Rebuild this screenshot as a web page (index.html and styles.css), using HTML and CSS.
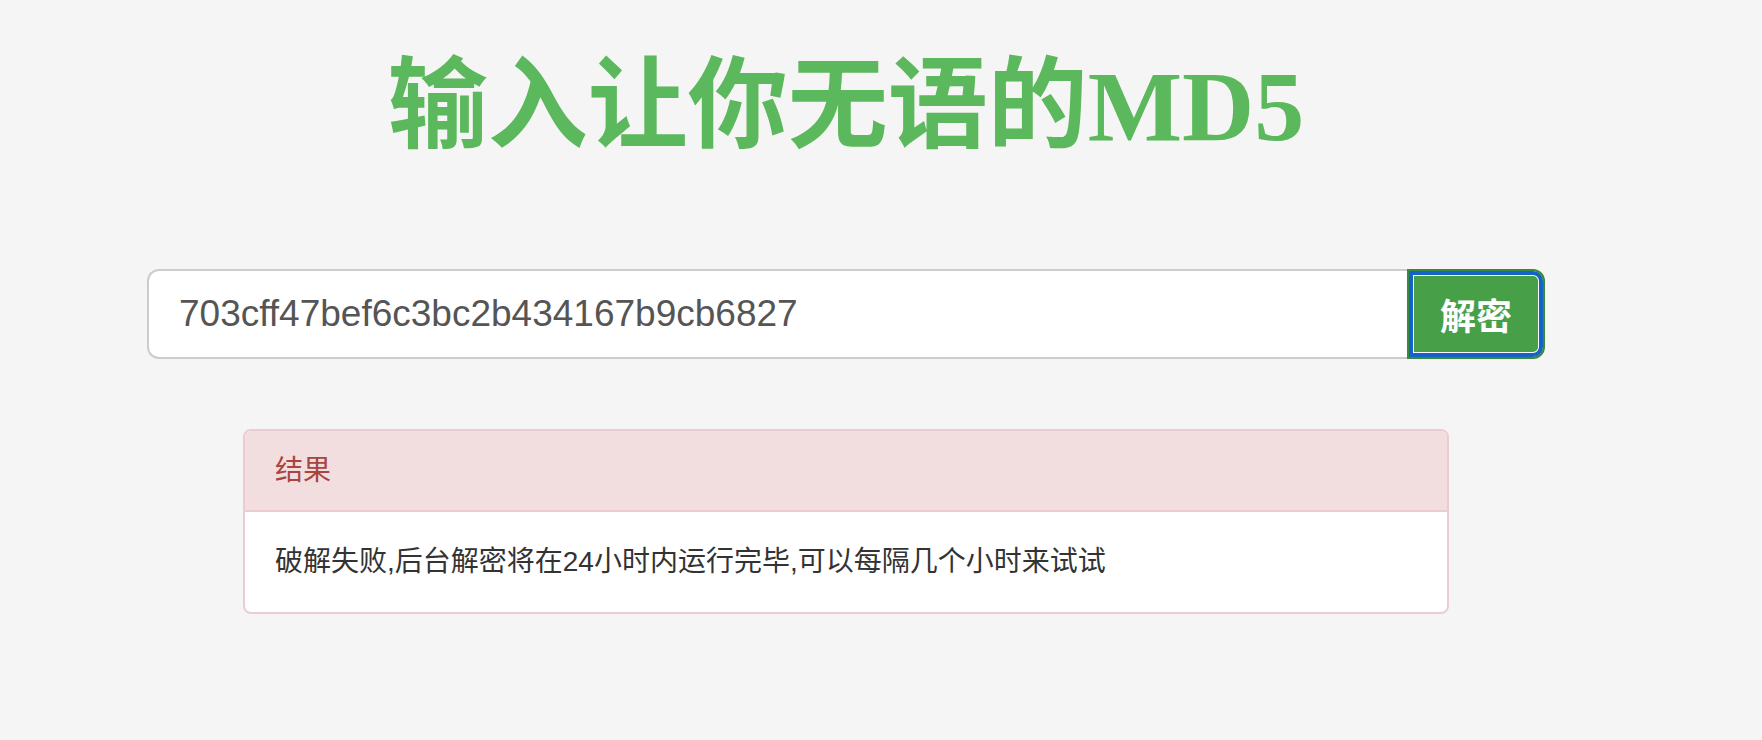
FILE: index.html
```html
<!DOCTYPE html>
<html>
<head>
<meta charset="utf-8">
<title>MD5</title>
<link rel="stylesheet" href="styles.css">
</head>
<body>
<div class="page">
  <h1 class="title">输入让你无语的MD5</h1>

  <div class="search">
    <input type="text" id="hash" class="hash" value="703cff47bef6c3bc2b434167b9cb6827">
    <button id="crack" class="crack">解密</button>
  </div>

  <div class="panel">
    <div class="panel-heading">结果</div>
    <div class="panel-body">破解失败,后台解密将在24小时内运行完毕,可以每隔几个小时来试试</div>
  </div>
</div>
</body>
</html>
```

FILE: styles.css
```css
body {
  margin: 0;
  background-color: #f5f5f5;
  font-family: "Liberation Sans", "Noto Sans CJK SC", sans-serif;
  color: #333;
}
.page {
  padding: 0 217px 0 147px;
}
.title {
  margin: 52px 0 0;
  text-align: center;
  font-family: "Liberation Serif", "Noto Sans CJK SC", serif;
  font-size: 100px;
  line-height: 110px;
  font-weight: bold;
  color: #5cb85c;
}
.search {
  display: flex;
  margin-top: 107px;
  height: 90px;
}
.hash {
  flex: 1;
  min-width: 0;
  margin: 0;
  padding: 0 30px;
  border: 2px solid #ccc;
  border-right: none;
  border-radius: 12px 0 0 12px;
  box-sizing: border-box;
  background-color: #fff;
  font-family: "Liberation Sans", sans-serif;
  font-size: 37px;
  color: #555;
  outline: none;
}
.crack {
  margin: 0;
  padding: 0 31px;
  border: 2px solid #3b8a3b;
  border-radius: 0 12px 12px 0;
  background-color: #47a047;
  box-shadow: inset 0 0 0 4px #1463c8, inset 0 0 0 5px #fff;
  font-family: "Noto Sans CJK SC", sans-serif;
  font-size: 36px;
  font-weight: bold;
  color: #fff;
}
.panel {
  margin: 70px 96px 0;
  border: 2px solid #ebccd1;
  border-radius: 8px;
  background-color: #fff;
  font-size: 28px;
  line-height: 40px;
}
.panel-heading {
  padding: 20px 30px 19px;
  border-bottom: 2px solid #ebccd1;
  border-radius: 6px 6px 0 0;
  background-color: #f2dede;
  color: #a94442;
}
.panel-body {
  padding: 30px;
}
```
